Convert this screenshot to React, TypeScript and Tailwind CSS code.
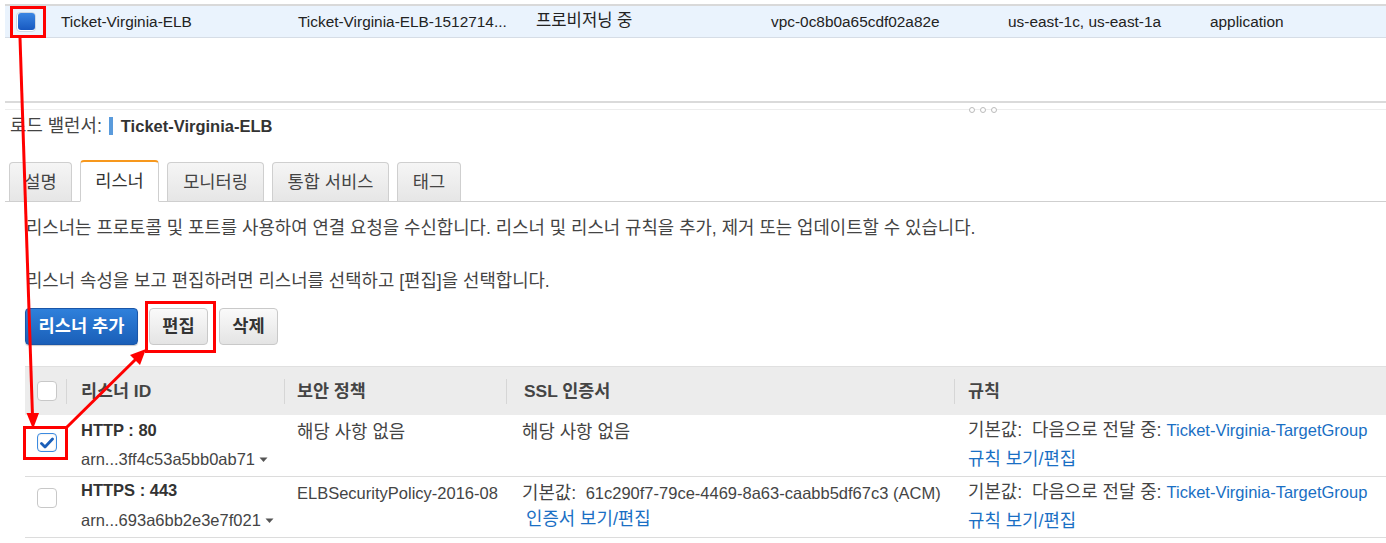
import React from "react";

const FONT = { fontFamily: '"Liberation Sans", Arial, "Noto Sans CJK KR", sans-serif' };

function K({ children, className = "" }: { children: React.ReactNode; className?: string }) {
  return <span className={`text-[1.08em] ${className}`}>{children}</span>;
}

function Caret() {
  return (
    <svg width="9" height="6" viewBox="0 0 9 6" className="inline-block ml-[4px] mb-[2px]">
      <path d="M0.5 0.5 L8.5 0.5 L4.5 5 Z" fill="#555" />
    </svg>
  );
}

function Checkbox({ checked }: { checked?: boolean }) {
  if (checked) {
    return (
      <div className="w-[20px] h-[19px] rounded-[4px] border border-[#3b8ae0] bg-white flex items-center justify-center shadow-[inset_0_0_2px_rgba(0,0,0,0.15)]">
        <svg width="14" height="12" viewBox="0 0 14 12">
          <path d="M1.5 6.5 L5 10 L12.5 2" stroke="#1b5fb8" strokeWidth="2.8" fill="none" strokeLinecap="round" strokeLinejoin="round" />
        </svg>
      </div>
    );
  }
  return <div className="w-[20px] h-[20px] rounded-[4px] border border-[#c8c8c8] bg-white" />;
}

function Tab({ label, active, w }: { label: string; active?: boolean; w: string }) {
  if (active) {
    return (
      <div className={`${w} h-[42px] -mb-px bg-white border border-[#cfcfcf] border-b-white border-t-[2px] border-t-[#f7981d] rounded-t-[4px] flex items-center justify-center text-[17.6px] text-[#333]`}>
        {label}
      </div>
    );
  }
  return (
    <div className={`${w} h-[39px] bg-gradient-to-b from-[#f5f5f5] to-[#e6e6e6] border border-[#cfcfcf] border-b-0 rounded-t-[4px] flex items-center justify-center text-[17.6px] text-[#444]`}>
      {label}
    </div>
  );
}

const LINK = "text-[#1a6fc4]";

export default function App() {
  return (
    <div className="w-[1386px] h-[543px] relative overflow-hidden bg-white text-[#333]" style={FONT}>
      {/* Top selected row */}
      <div className="pt-[4px] pl-[5px]">
        <div className="border-t-[2px] border-[#d9d9d9] h-[34px] bg-[#eaf3fd] border-b border-b-[#d6dde6] flex items-center text-[15.4px] text-[#222]">
          <div className="w-[56px] pl-[11px] flex items-center">
            <div className="w-[20px] h-[20px] rounded-[4px] border border-[#cfd8e3] bg-white flex items-center justify-center">
              <div className="w-[17px] h-[17px] rounded-[3px] bg-gradient-to-b from-[#3a85e3] to-[#1859c0]" />
            </div>
          </div>
          <div className="w-[237px]">Ticket-Virginia-ELB</div>
          <div className="w-[238px]">Ticket-Virginia-ELB-1512714...</div>
          <div className="w-[235px]"><K>프로비저닝 중</K></div>
          <div className="w-[237px]">vpc-0c8b0a65cdf02a82e</div>
          <div className="w-[202px]">us-east-1c, us-east-1a</div>
          <div className="flex-1">application</div>
        </div>
      </div>

      {/* Splitter */}
      <div className="mt-[63px] ml-[5px] border-t-[2px] border-[#dadada]" />
      <div className="ml-[5px] h-[7px] border-b border-[#ededed] flex">
        <div className="flex gap-[5px] pt-[4px] ml-[964px]">
          <div className="w-[6px] h-[6px] rounded-full border border-[#bbb] bg-white" />
          <div className="w-[6px] h-[6px] rounded-full border border-[#bbb] bg-white" />
          <div className="w-[6px] h-[6px] rounded-full border border-[#bbb] bg-white" />
        </div>
      </div>

      {/* Load balancer title */}
      <div className="mt-[7px] pl-[10px] h-[18px] flex items-center text-[16.5px] text-[#444]">
        <K>로드 밸런서:</K>
        <span className="ml-[7px] w-[4px] h-[18px] bg-[#5a9bdc]" />
        <span className="ml-[8px] font-bold text-[#333]">Ticket-Virginia-ELB</span>
      </div>

      {/* Tabs */}
      <div className="mt-[28px] ml-[5px] flex items-end gap-[8px] pl-[4px] border-b border-[#cfcfcf] h-[39px]">
        <Tab label="설명" w="w-[63px]" />
        <Tab label="리스너" active w="w-[79px]" />
        <Tab label="모니터링" w="w-[97px]" />
        <Tab label="통합 서비스" w="w-[117px]" />
        <Tab label="태그" w="w-[64px]" />
      </div>

      {/* Descriptions */}
      <div className="pl-[26px] text-[17.8px] text-[#444]">
        <div className="mt-[16px] h-[20px] leading-[20px] whitespace-nowrap">
          리스너는 프로토콜 및 포트를 사용하여 연결 요청을 수신합니다. 리스너 및 리스너 규칙을 추가, 제거 또는 업데이트할 수 있습니다.
        </div>
        <div className="mt-[33px] h-[20px] leading-[20px] whitespace-nowrap">
          리스너 속성을 보고 편집하려면 리스너를 선택하고 [편집]을 선택합니다.
        </div>
      </div>

      {/* Buttons */}
      <div className="mt-[17px] pl-[25px] flex gap-[11px]">
        <button className="w-[113px] h-[37px] rounded-[4px] bg-gradient-to-b from-[#2f80db] to-[#1a5fb8] border border-[#1a56a8] text-white font-bold text-[17.6px] shadow-[0_1px_1px_rgba(0,0,0,0.2)]">
          리스너 추가
        </button>
        <button className="w-[59px] h-[37px] rounded-[4px] bg-gradient-to-b from-[#fafafa] to-[#e4e4e4] border border-[#c9c9c9] text-[#333] font-bold text-[17.6px]">
          편집
        </button>
        <button className="w-[59px] h-[37px] rounded-[4px] bg-gradient-to-b from-[#fafafa] to-[#e4e4e4] border border-[#c9c9c9] text-[#333] font-bold text-[17.6px]">
          삭제
        </button>
      </div>

      {/* Table */}
      <div className="mt-[21px] ml-[25px] text-[16.5px]">
        <div className="h-[49px] bg-[#ececec] border-t border-[#e0e0e0] flex items-center font-bold text-[#444] text-[17.4px]">
          <div className="w-[42px] h-[25px] flex items-center pl-[12px] border-r border-[#d6d6d6]">
            <Checkbox />
          </div>
          <div className="w-[218px] h-[25px] flex items-center pl-[14px] border-r border-[#d6d6d6]">리스너 ID</div>
          <div className="w-[222px] h-[25px] flex items-center pl-[12px] border-r border-[#d6d6d6]">보안 정책</div>
          <div className="w-[448px] h-[25px] flex items-center pl-[17px] border-r border-[#d6d6d6]">SSL 인증서</div>
          <div className="flex-1 h-[25px] flex items-center pl-[13px]">규칙</div>
        </div>

        {/* Row 1 */}
        <div className="h-[62px] border-b border-[#dcdcdc] flex text-[#444]">
          <div className="w-[42px] pl-[12px] pt-[18px]">
            <Checkbox checked />
          </div>
          <div className="w-[218px] pl-[14px] pt-[6px] leading-[18px]">
            <div className="font-bold text-[#333]">HTTP : 80</div>
            <div className="mt-[11px]">arn...3ff4c53a5bb0ab71<Caret /></div>
          </div>
          <div className="w-[222px] pl-[12px] pt-[8px] leading-[18px]"><K>해당 사항 없음</K></div>
          <div className="w-[448px] pl-[15px] pt-[8px] leading-[18px]"><K>해당 사항 없음</K></div>
          <div className="flex-1 pl-[13px] pt-[6px] leading-[18px] whitespace-nowrap">
            <div><K>기본값:&nbsp; 다음으로 전달 중: </K><span className={LINK}>Ticket-Virginia-TargetGroup</span></div>
            <div className={`mt-[11px] ${LINK}`}><K>규칙 보기/편집</K></div>
          </div>
        </div>

        {/* Row 2 */}
        <div className="h-[61px] border-b border-[#dcdcdc] flex text-[#444]">
          <div className="w-[42px] pl-[12px] pt-[11px]">
            <Checkbox />
          </div>
          <div className="w-[218px] pl-[14px] pt-[4px] leading-[18px]">
            <div className="font-bold text-[#333]">HTTPS : 443</div>
            <div className="mt-[12px]">arn...693a6bb2e3e7f021<Caret /></div>
          </div>
          <div className="w-[222px] pl-[12px] pt-[7px] leading-[18px]">ELBSecurityPolicy-2016-08</div>
          <div className="w-[448px] pl-[15px] pt-[7px] leading-[18px] whitespace-nowrap">
            <div><K>기본값:&nbsp;</K> 61c290f7-79ce-4469-8a63-caabb5df67c3 (ACM)</div>
            <div className={`mt-[8px] pl-[4px] ${LINK}`}><K>인증서 보기/편집</K></div>
          </div>
          <div className="flex-1 pl-[13px] pt-[6px] leading-[18px] whitespace-nowrap">
            <div><K>기본값:&nbsp; 다음으로 전달 중: </K><span className={LINK}>Ticket-Virginia-TargetGroup</span></div>
            <div className={`mt-[11px] ${LINK}`}><K>규칙 보기/편집</K></div>
          </div>
        </div>
      </div>

      {/* Annotations */}
      <div className="absolute left-[10px] top-[6px] w-[36px] h-[32px] border-[3px] border-[#f00]" />
      <div className="absolute left-[145px] top-[301px] w-[71px] h-[52px] border-[3px] border-[#f00]" />
      <div className="absolute left-[23px] top-[426px] w-[45px] h-[34px] border-[3px] border-[#f00]" />
      <svg className="absolute left-0 top-0 pointer-events-none" width="1386" height="543">
        <line x1="20" y1="38" x2="32.5" y2="416" stroke="#f00" strokeWidth="3" />
        <polygon points="33,429 26.5,413 39,413" fill="#f00" />
        <line x1="67" y1="427" x2="137" y2="358" stroke="#f00" strokeWidth="3" />
        <polygon points="146,349 140,365 130,355" fill="#f00" />
      </svg>
    </div>
  );
}
